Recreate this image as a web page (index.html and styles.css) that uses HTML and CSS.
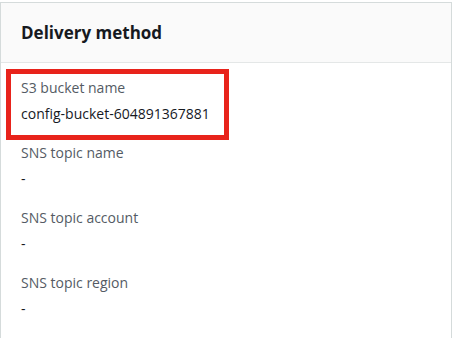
FILE: index.html
```html
<!DOCTYPE html>
<html lang="en">
<head>
    <meta charset="UTF-8">
    <meta name="viewport" content="width=device-width, initial-scale=1.0">
    <title>Delivery method</title>
    <link rel="stylesheet" href="styles.css">
</head>
<body>
    <div class="panel">
        <div class="panel-header">
            <h2>Delivery method</h2>
        </div>
        <div class="panel-body">
            <div class="field highlight">
                <div class="label">S3 bucket name</div>
                <div class="value">config-bucket-604891367881</div>
            </div>
            <div class="field">
                <div class="label">SNS topic name</div>
                <div class="value">-</div>
            </div>
            <div class="field">
                <div class="label">SNS topic account</div>
                <div class="value">-</div>
            </div>
            <div class="field">
                <div class="label">SNS topic region</div>
                <div class="value">-</div>
            </div>
        </div>
    </div>
</body>
</html>
```

FILE: styles.css
```css
body {
    font-family: 'Open Sans', sans-serif;
    margin: 0;
    padding: 0;
    background: #ffffff;
    color: #16191f;
}
.panel {
    width: 450px;
    margin-top: 2px;
    border: 1px solid #d5dbdb;
    border-bottom: none;
    background: white;
    height: 340px;
}
.panel-header {
    background: #fafafa;
    border-bottom: 1px solid #e4e7e7;
    height: 59px;
    padding: 0 20px;
    display: flex;
    align-items: center;
}
.panel-header h2 {
    margin: 0;
    font-size: 17px;
    font-weight: bold;
    color: #16191f;
}
.panel-body {
    padding-top: 6px;
}
.field {
    position: relative;
    height: 65px;
    box-sizing: border-box;
    padding: 10px 20px 0 20px;
}
/* red annotation box drawn over the first field */
.field.highlight::before {
    content: "";
    position: absolute;
    left: 5px;
    top: 0;
    width: 223px;
    height: 71px;
    box-sizing: border-box;
    border: 5px solid #e8231b;
}
.label {
    font-size: 14px;
    color: #545b64;
    line-height: 18px;
}
.value {
    font-size: 14px;
    color: #16191f;
    line-height: 18px;
    margin-top: 8px;
}
```
